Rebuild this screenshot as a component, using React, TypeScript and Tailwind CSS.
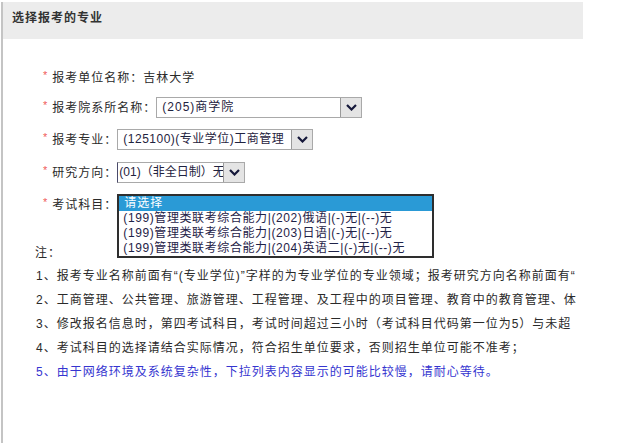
import React from "react";

const subjects = [
  "(199)管理类联考综合能力|(202)俄语|(-)无|(--)无",
  "(199)管理类联考综合能力|(203)日语|(-)无|(--)无",
  "(199)管理类联考综合能力|(204)英语二|(-)无|(--)无",
];

// the page box clips these lines at its right edge, as on the original
const notes = [
  "1、报考专业名称前面有“(专业学位)”字样的为专业学位的专业领域；报考研究方向名称前面有“",
  "2、工商管理、公共管理、旅游管理、工程管理、及工程中的项目管理、教育中的教育管理、体",
  "3、修改报名信息时，第四考试科目，考试时间超过三小时（考试科目代码第一位为5）与未超",
  "4、考试科目的选择请结合实际情况，符合招生单位要求，否则招生单位可能不准考；",
];

function Star() {
  return <span className="mr-[4px] -mt-[5px] text-[11px] text-[#f05a5a]">*</span>;
}

function Chevron() {
  return (
    <svg width="11" height="7" viewBox="0 0 11 7">
      <path d="M1 1l4.5 4.5L10 1" fill="none" stroke="#15183a" strokeWidth="2.2" />
    </svg>
  );
}

function FakeSelect({ value, className, textClass }: { value: string; className: string; textClass: string }) {
  return (
    <div className={`flex h-[21px] border border-[#a9a9a9] bg-white ${className}`}>
      <div className={`min-w-0 flex-1 overflow-hidden whitespace-nowrap leading-[19px] text-[#1f2340] ${textClass}`}>
        {value}
      </div>
      <div className="flex w-[21px] items-center justify-center border-l border-[#9a9a9a] bg-[#e4e4e4]">
        <Chevron />
      </div>
    </div>
  );
}

export default function App() {
  return (
    <div className="h-[443px] w-[634px] overflow-hidden bg-white font-[Liberation_Sans,Noto_Sans_CJK_SC,sans-serif] text-[12px] tracking-[1px] text-[#2a2a2a]">
      <div className="ml-[1px] mt-[2px] h-[441px] w-[582px] overflow-hidden border-l-2 border-[#c4c4c4]">
        <div className="h-[37px] bg-[#ececec] pl-[9px] pt-[8px] font-bold leading-[16px] text-[#333]">
          选择报考的专业
        </div>

        <div className="pl-[40px]">
          <div className="mt-[29px] flex h-[20px] items-center">
            <Star />
            <span>报考单位名称：吉林大学</span>
          </div>

          <div className="mt-[9px] flex h-[21px] items-center">
            <Star />
            <span>报考院系所名称：</span>
            <FakeSelect value="(205)商学院" className="w-[206px]" textClass="pl-[5px]" />
          </div>

          <div className="mt-[11px] flex h-[21px] items-center">
            <Star />
            <span>报考专业：</span>
            <FakeSelect value="(125100)(专业学位)工商管理" className="w-[196px]" textClass="pl-[5px] tracking-[0.5px]" />
          </div>

          <div className="mt-[12px] flex h-[21px] items-center">
            <Star />
            <span>研究方向：</span>
            <FakeSelect value="(01)（非全日制）无" className="w-[128px] border-l-[#4a4a6a]" textClass="pl-[1px] tracking-[0px]" />
          </div>

          <div className="mt-[11px] flex h-[21px] items-center">
            <Star />
            <span>考试科目：</span>
            <div className="relative h-[21px] w-[317px]">
              <div className="absolute left-0 top-0 h-[64px] w-[317px] border-2 border-[#2e2e2e] bg-white">
                <div className="h-[15px] bg-[#2a9ad6] pl-[5px] leading-[15px] text-white">请选择</div>
                {subjects.map((s) => (
                  <div key={s} className="h-[15px] whitespace-nowrap pl-[4px] leading-[15px] tracking-[0.6px] text-[#1f2348]">
                    {s}
                  </div>
                ))}
              </div>
            </div>
          </div>
        </div>

        <div className="mt-[27px] pl-[32px] leading-[22px]">注：</div>
        <div className="pl-[33px]">
          {notes.map((n) => (
            <div key={n} className="h-[24px] whitespace-nowrap leading-[24px]">
              {n}
            </div>
          ))}
          <div className="h-[24px] whitespace-nowrap leading-[24px] text-[#3535d0]">
            5、由于网络环境及系统复杂性，下拉列表内容显示的可能比较慢，请耐心等待。
          </div>
        </div>
      </div>
    </div>
  );
}
